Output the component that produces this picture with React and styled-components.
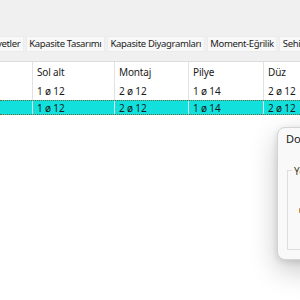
import React from "react";
import styled, { createGlobalStyle } from "styled-components";

const Global = createGlobalStyle`
  html, body { margin: 0; padding: 0; background: #f0f0f0; }
  body { width: 300px; height: 300px; overflow: hidden; font-family: "Noto Sans", "Open Sans", sans-serif; }
  #root { width: 300px; height: 300px; position: relative; overflow: hidden; }
`;

const Page = styled.div`
  width: 300px;
  height: 300px;
  display: flex;
  flex-direction: column;
  background: #ffffff;
  position: relative;
  overflow: hidden;
`;

const TopArea = styled.div`
  background: #f0f0f0;
  padding-top: 36px;
  border-bottom: 1px solid #dcdcdc;
  padding-bottom: 8px;
  height: 17px;
`;

const TabStrip = styled.div`
  display: flex;
  gap: 2px;
  margin-left: -22px;
  white-space: nowrap;
`;

const Tab = styled.div`
  height: 14px;
  padding: 0 2.5px;
  background: #f8f8f8;
  border: 1px solid #ececec;
  font-size: 9.5px;
  letter-spacing: -0.35px;
  line-height: 14px;
  color: #1b1b1b;
`;

const Grid = styled.div`
  display: flex;
  flex-direction: column;
`;

const Row = styled.div`
  display: flex;
  height: ${(p) => p.$h}px;
  background: ${(p) => (p.$sel ? "#12e0dc" : "#ffffff")};
  border-top: ${(p) => (p.$sel ? "1px dotted #6a6a3a" : "none")};
  border-bottom: ${(p) => (p.$sel ? "1px dotted #6a6a3a" : "none")};
  box-sizing: border-box;
`;

const Cell = styled.div`
  width: ${(p) => p.$w}px;
  flex: none;
  box-sizing: border-box;
  border-left: ${(p) => (p.$first ? "none" : "1px solid #e2e2e2")};
  padding-left: 4px;
  font-size: 10px;
  letter-spacing: -0.15px;
  color: #1a1a1a;
  display: flex;
  align-items: center;
  white-space: nowrap;
`;

const Dialog = styled.div`
  position: absolute;
  left: 277px;
  top: 127px;
  width: 120px;
  height: 133px;
  box-sizing: border-box;
  background: #f9f9f9;
  border: 1px solid #d4d4d4;
  border-radius: 8px;
  box-shadow: 0 10px 28px rgba(0, 0, 0, 0.22), 0 2px 6px rgba(0, 0, 0, 0.12);
  display: flex;
  flex-direction: column;
  padding: 3px 0 9px 9px;
`;

const DialogTitle = styled.div`
  font-size: 11px;
  color: #1a1a1a;
  height: 16px;
  line-height: 16px;
  margin-left: -1px;
`;

const GroupBox = styled.div`
  margin-top: 23px;
  flex: 1;
  border: 1px solid #dddddd;
  border-right: none;
  position: relative;
  padding: 6px 0 0 10px;
`;

const GroupTitle = styled.span`
  position: absolute;
  top: -6px;
  left: 4px;
  padding: 0 2px;
  background: #f9f9f9;
  font-size: 10px;
  line-height: 12px;
  color: #3a3a20;
`;

const Dot = styled.div`
  margin-top: 31px;
  margin-left: 1px;
  width: 3px;
  height: 5px;
  background: #d08a2a;
  border-radius: 1px;
`;

const cols = [32, 82, 74, 75, 75];
const header = ["", "Sol alt", "Montaj", "Pilye", "Düz"];
const data = ["", "1 ø 12", "2 ø 12", "1 ø 14", "2 ø 12"];

export default function App() {
  return (
    <>
      <Global />
      <Page>
        <TopArea>
          <TabStrip>
            <Tab>Kuvvetler</Tab>
            <Tab>Kapasite Tasarımı</Tab>
            <Tab>Kapasite Diyagramları</Tab>
            <Tab>Moment-Eğrilik</Tab>
            <Tab>Sehim</Tab>
          </TabStrip>
        </TopArea>
        <Grid>
          <Row $h={20}>
            {header.map((t, i) => (
              <Cell key={i} $w={cols[i]} $first={i === 0}>{t}</Cell>
            ))}
          </Row>
          <Row $h={18}>
            {data.map((t, i) => (
              <Cell key={i} $w={cols[i]} $first={i === 0}>{t}</Cell>
            ))}
          </Row>
          <Row $h={15} $sel>
            {data.map((t, i) => (
              <Cell key={i} $w={cols[i]} $first={i === 0}>{t}</Cell>
            ))}
          </Row>
        </Grid>
        <Dialog>
          <DialogTitle>Donatı</DialogTitle>
          <GroupBox>
            <GroupTitle>Yerleşim</GroupTitle>
            <Dot />
          </GroupBox>
        </Dialog>
      </Page>
    </>
  );
}
